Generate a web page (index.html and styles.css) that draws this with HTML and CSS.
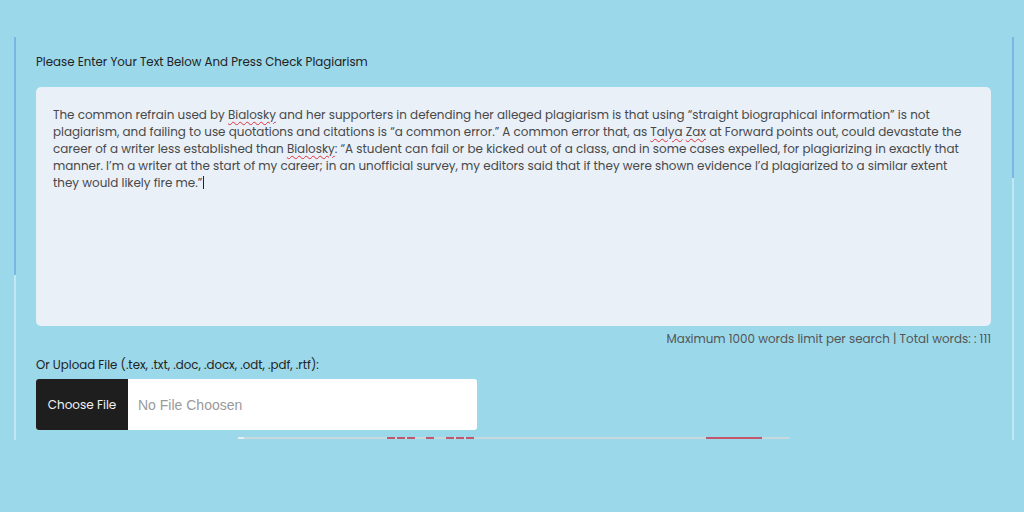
FILE: index.html
```html
<!DOCTYPE html>
<html>
<head>
<meta charset="utf-8">
<link rel="stylesheet" href="styles.css">
</head>
<body>
<div class="frame">
  <p class="label">Please Enter Your Text Below And Press Check Plagiarism</p>
  <div class="textbox">
    <span class="line">The common refrain used by <span class="sp">Bialosky</span> and her supporters in defending her alleged plagiarism is that using “straight biographical information” is not</span>
    <span class="line">plagiarism, and failing to use quotations and citations is “a common error.” A common error that, as <span class="sp">Talya</span> <span class="sp">Zax</span> at Forward points out, could devastate the</span>
    <span class="line">career of a writer less established than <span class="sp">Bialosky</span>: “A student can fail or be kicked out of a class, and in some cases expelled, for plagiarizing in exactly that</span>
    <span class="line">manner. I’m a writer at the start of my career; in an unofficial survey, my editors said that if they were shown evidence I’d plagiarized to a similar extent</span>
    <span class="line">they would likely fire me.”<span class="caret"></span></span>
  </div>
  <p class="count">Maximum 1000 words limit per search | Total words: : 111</p>
  <p class="label upload">Or Upload File (.tex, .txt, .doc, .docx, .odt, .pdf, .rtf):</p>
  <div class="file">
    <span class="choose">Choose File</span>
    <span class="none">No File Choosen</span>
  </div>
  <div class="cutoff">
    <span class="seg g" style="width:6px"></span>
    <span class="gap" style="width:141px"></span>
    <span class="seg r" style="width:8px"></span>
    <span class="seg r" style="width:8px"></span>
    <span class="seg r" style="width:8px"></span>
    <span class="gap" style="width:9px"></span>
    <span class="seg r" style="width:8px"></span>
    <span class="gap" style="width:10px"></span>
    <span class="seg r" style="width:8px"></span>
    <span class="seg r" style="width:8px"></span>
    <span class="seg r" style="width:8px"></span>
    <span class="gap" style="width:230px"></span>
    <span class="seg r" style="width:56px"></span>
  </div>
</div>
</body>
</html>
```
FILE: styles.css
```css
html, body {
  margin: 0;
  padding: 0;
  background: #9bd8ea;
  width: 1024px;
  height: 512px;
  overflow: hidden;
}
body {
  font-family: "Poppins", "Open Sans", "Noto Sans", sans-serif;
}
.frame {
  position: relative;
  margin: 37px 0 0 14px;
  width: 1000px;
  height: 403px;
  box-sizing: border-box;
  padding: 17px 0 0 22px;
  background-image:
    linear-gradient(to bottom, #78b7e5 0, #78b7e5 238px, #bfe7f4 238px, #bfe7f4 100%),
    linear-gradient(to bottom, #78b7e5 0, #78b7e5 141px, #bfe7f4 141px, #bfe7f4 100%);
  background-size: 2px 100%, 2px 100%;
  background-position: 0 0, 998px 0;
  background-repeat: no-repeat;
}
.label {
  margin: 0;
  font-size: 11.8px;
  line-height: 16px;
  color: #222;
}
.textbox {
  margin-top: 17px;
  width: 955px;
  height: 239px;
  box-sizing: border-box;
  background: #e9f0f8;
  border-radius: 5px;
  padding: 18.5px 17px;
  color: #484848;
  font-size: 11.93px;
  line-height: 17px;
}
.line {
  display: block;
  white-space: nowrap;
}
.sp {
  text-decoration: underline wavy #e0303a;
  text-decoration-thickness: 1px;
  text-underline-offset: 2px;
}
.caret {
  display: inline-block;
  width: 1px;
  height: 13px;
  background: #222;
  vertical-align: -2px;
  margin-left: 1px;
}
.count {
  margin: 5px 0 0 0;
  width: 955px;
  text-align: right;
  font-size: 11.9px;
  line-height: 16px;
  color: #555;
}
.upload {
  margin-top: 10px;
}
.file {
  margin-top: 6px;
  width: 441px;
  height: 51px;
  display: flex;
  background: #fff;
  border-radius: 3px;
  overflow: hidden;
}
.choose {
  width: 92px;
  background: #1e1e1e;
  color: #f2f2f2;
  font-size: 12px;
  display: flex;
  align-items: center;
  justify-content: center;
}
.none {
  padding-left: 10px;
  display: flex;
  align-items: center;
  font-family: "Liberation Sans", Arial, sans-serif;
  font-size: 14px;
  color: #9a9a9a;
}
.cutoff {
  margin: 7px 0 0 202px;
  width: 552px;
  height: 2px;
  background: #c9d8dc;
  display: flex;
}
.seg { height: 2px; margin-right: 2px; }
.seg.r { background: #c4566c; }
.seg.g { background: #e8eef0; }
.gap { height: 2px; }
```
